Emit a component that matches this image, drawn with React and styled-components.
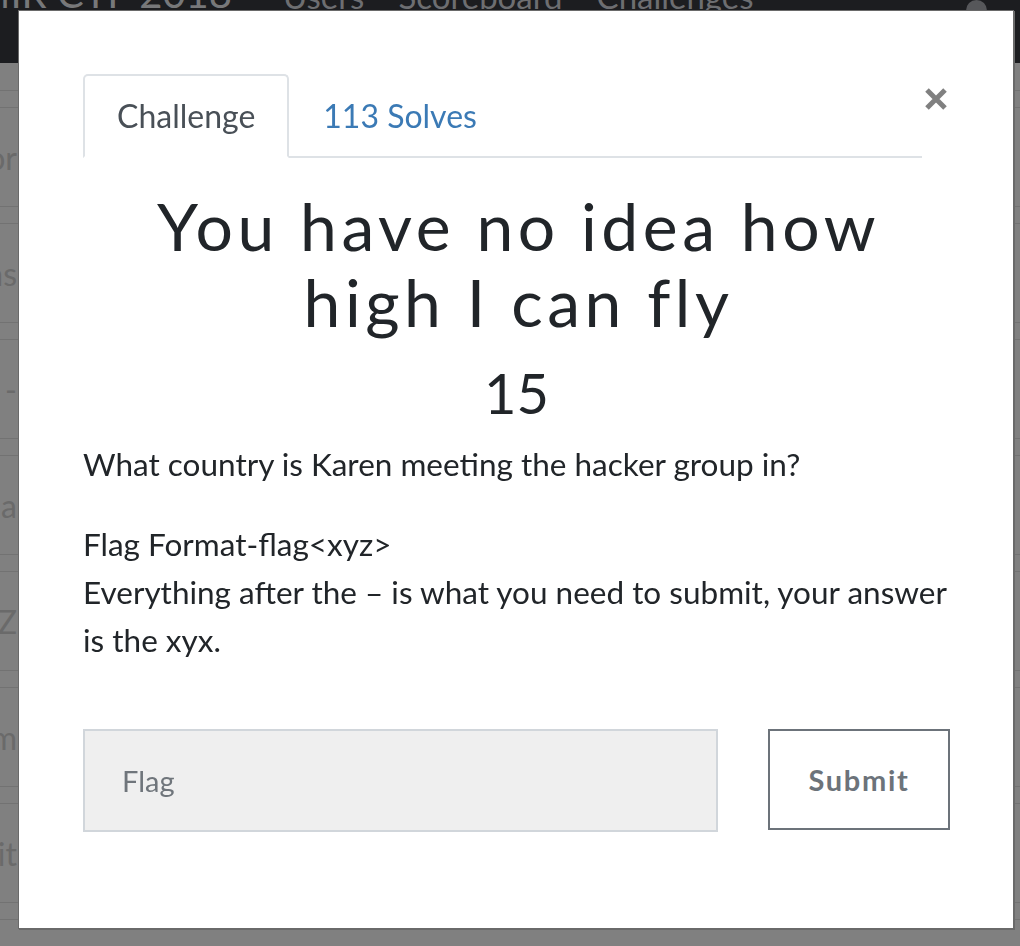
import React from "react";
import styled, { createGlobalStyle } from "styled-components";

const GlobalStyle = createGlobalStyle`
  *, *::before, *::after {
    box-sizing: border-box;
  }
  html, body {
    margin: 0;
    padding: 0;
    background: #808080;
    font-family: Lato, "Liberation Sans", sans-serif;
  }
`;

const Page = styled.div`
  height: 946px;
  overflow: hidden;
  background: #808080;
`;

const Navbar = styled.div`
  height: 63px;
  background: #1c1d20;
  display: flex;
  align-items: flex-start;
  overflow: hidden;
`;

const Brand = styled.div`
  width: 232px;
  display: flex;
  justify-content: flex-end;
  overflow: hidden;
  white-space: nowrap;
  margin-top: -27px;
  font-size: 40px;
  line-height: 40px;
  color: #77787a;
`;

const NavLinks = styled.div`
  display: flex;
  gap: 34px;
  margin-left: 51px;
  margin-top: -24px;
  font-size: 33px;
  line-height: 40px;
  color: #6d6e71;
`;

const Avatar = styled.div`
  width: 21px;
  height: 21px;
  border-radius: 50%;
  background: #56575a;
  margin-left: auto;
  margin-right: 33px;
`;

const TableList = styled.div`
  padding-top: 27px;
`;

const RowStrip = styled.div`
  height: 18px;
  border-top: 1px solid #727272;
  border-bottom: 1px solid #727272;
`;

const RowBody = styled.div`
  height: 98px;
  display: flex;
  align-items: center;
`;

const RowLabel = styled.div`
  width: 17px;
  display: flex;
  justify-content: flex-end;
  overflow: hidden;
  white-space: nowrap;
  font-size: 32px;
  color: #6a6a6a;
`;

const Overlay = styled.div`
  position: fixed;
  inset: 0;
  padding: 10px 0 0 18px;
`;

const Modal = styled.div`
  width: 996px;
  background: #fff;
  border: 1px solid #6a6a6a;
  box-shadow: 1px 1px 0 #6a6a6a;
  padding: 63px 63px 96px 64px;
  color: #212529;
`;

const Header = styled.div`
  display: flex;
  align-items: flex-start;
`;

const Tabs = styled.div`
  flex: 1;
  display: flex;
  border-bottom: 2px solid #dee2e6;
`;

const Tab = styled.div`
  padding: 16px 32px;
  margin-bottom: -2px;
  font-size: 32px;
  line-height: 48px;
  border: 2px solid ${(p) => (p.$active ? "#dee2e6" : "transparent")};
  border-bottom-color: ${(p) => (p.$active ? "#fff" : "transparent")};
  border-radius: 5px 5px 0 0;
  background: ${(p) => (p.$active ? "#fff" : "transparent")};
  color: ${(p) => (p.$active ? "#495057" : "#3b7ab5")};
`;

const CloseButton = styled.button`
  width: 28px;
  margin-top: 14px;
  padding: 0;
  border: 0;
  background: none;
  display: flex;
  justify-content: center;
`;

const Title = styled.h2`
  margin: 30px 0 0;
  padding-left: 4px;
  text-align: center;
  font-size: 66px;
  line-height: 76px;
  font-weight: 400;
  letter-spacing: 4.5px;
  color: #212529;
`;

const Points = styled.h3`
  margin: 19px 0 14px;
  text-align: center;
  font-size: 56px;
  line-height: 1.2;
  font-weight: 400;
`;

const Description = styled.div`
  font-size: 31.5px;
  line-height: 48px;

  p {
    margin: 0 0 32px;
  }
`;

const SubmitRow = styled.div`
  display: grid;
  grid-template-columns: 1fr 182px;
  gap: 50px;
  margin-top: 65px;
`;

const FlagInput = styled.input`
  height: 103px;
  border: 2px solid #d1d6db;
  background: #efefef;
  padding: 0 37px;
  font-family: Lato, "Liberation Sans", sans-serif;
  font-size: 29px;
  color: #495057;
  outline: none;

  &::placeholder {
    color: #6f757b;
  }
`;

const SubmitButton = styled.button`
  height: 101px;
  border: 2px solid #6c737a;
  background: #fff;
  font-family: Lato, "Liberation Sans", sans-serif;
  font-size: 29px;
  font-weight: 700;
  letter-spacing: 1.7px;
  color: #6c737a;
`;

const rows = ["Vendor", "Questions", "-", "Pha", "XYZ", "Team", "Submit", ""];

const CloseIcon = () => (
  <svg width="22" height="22" viewBox="0 0 22 22">
    <path d="M2 2 L20 20 M20 2 L2 20" stroke="#808080" strokeWidth="5" />
  </svg>
);

export default function App() {
  return (
    <>
      <GlobalStyle />
      <Page>
        <Navbar>
          <Brand>MIR CTF 2018</Brand>
          <NavLinks>
            <span>Users</span>
            <span>Scoreboard</span>
            <span>Challenges</span>
          </NavLinks>
          <Avatar />
        </Navbar>
        <TableList>
          {rows.map((label, i) => (
            <div key={i}>
              <RowStrip />
              <RowBody>
                <RowLabel>{label}</RowLabel>
              </RowBody>
            </div>
          ))}
        </TableList>
      </Page>
      <Overlay>
        <Modal>
          <Header>
            <Tabs>
              <Tab $active>Challenge</Tab>
              <Tab>113 Solves</Tab>
            </Tabs>
            <CloseButton aria-label="Close">
              <CloseIcon />
            </CloseButton>
          </Header>
          <Title>You have no idea how high I can fly</Title>
          <Points>15</Points>
          <Description>
            <p>What country is Karen meeting the hacker group in?</p>
            <p>
              Flag Format-flag&lt;xyz&gt;
              <br />
              Everything after the – is what you need to submit, your answer is
              the xyx.
            </p>
          </Description>
          <SubmitRow>
            <FlagInput placeholder="Flag" />
            <SubmitButton>Submit</SubmitButton>
          </SubmitRow>
        </Modal>
      </Overlay>
    </>
  );
}
